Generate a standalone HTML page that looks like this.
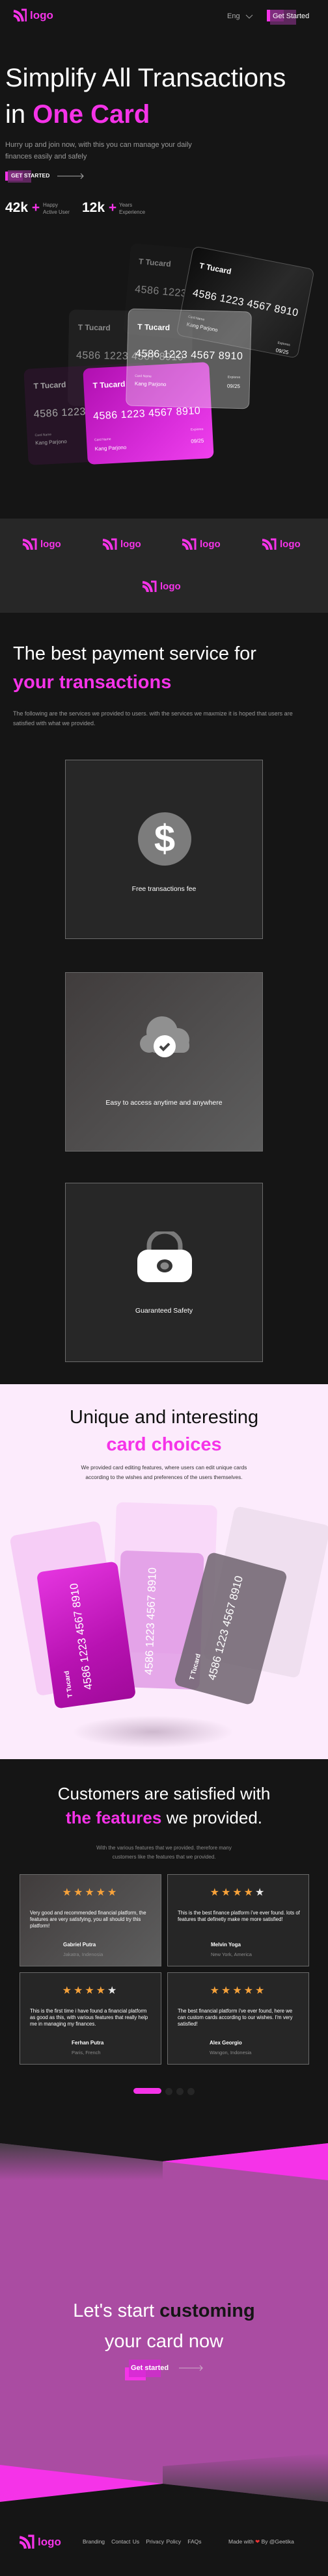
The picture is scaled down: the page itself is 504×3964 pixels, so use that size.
<!DOCTYPE html>
<html><head><meta charset="utf-8">
<style>
*{margin:0;padding:0;box-sizing:border-box}
body{width:504px;height:3964px;background:#151515;font-family:"Liberation Sans",sans-serif;position:relative;overflow:hidden;color:#fff}
.a{position:absolute}
.pk{color:#f533e8}
.logo{position:absolute;display:flex;align-items:center;gap:5px;color:#f533e8;font-weight:bold;font-size:17px}
.card{position:absolute;border-radius:10px;overflow:hidden;color:#fff}
.card .t{position:absolute;left:14px;top:20px;font-size:12px;font-weight:bold}
.card .n{position:absolute;left:12px;top:62px;font-size:16px;letter-spacing:.5px}
.card .cn{position:absolute;left:12px;top:100px;font-size:5px;opacity:.8}
.card .kp{position:absolute;left:12px;top:110px;font-size:8px}
.card .ex{position:absolute;right:14px;top:98px;font-size:5px;opacity:.8}
.card .dt{position:absolute;right:14px;top:110px;font-size:8px}
.box{position:absolute;left:100px;width:304px;height:276px;border:1.5px solid #6b6b6b;background:#272727}
.box .lb{position:absolute;width:100%;text-align:center;font-size:10.5px}
.tb{position:absolute;width:218px;height:142px;border:1.5px solid #6b6b6b;background:#262626}
.tb .st{position:absolute;top:17px;width:100%;text-align:center;color:#f7a23a;font-size:16px;letter-spacing:3px}
.tb .st b{color:#e8e8e8;font-weight:normal}
.tb .q{position:absolute;left:15px;right:12px;top:54px;font-size:7.8px;line-height:10px}
.tb .nm{position:absolute;top:103px;font-size:8px;font-weight:bold}
.tb .lc{position:absolute;top:118px;font-size:7.5px;color:#8a8a8a}
.vc{position:absolute;border-radius:10px;overflow:hidden}
</style></head><body>

<!-- header -->
<div class="logo" style="left:19px;top:13px">
<svg width="22" height="22" viewBox="0 0 22 22"><path d="M2 4 Q14 6 16 20" stroke="#f533e8" stroke-width="4" fill="none"/><path d="M2 11 Q9 12 10 20" stroke="#f533e8" stroke-width="4" fill="none"/><path d="M14 2h7v18" stroke="#f533e8" stroke-width="3" fill="none"/></svg>logo</div>
<div class="a" style="left:349px;top:19px;font-size:11px;color:#aaa">Eng</div>
<svg class="a" style="left:377px;top:22px" width="12" height="8"><path d="M1 1l5 5 5-5" stroke="#999" fill="none"/></svg>
<div class="a" style="left:410px;top:15px;width:26px;height:18px;background:#f533e8"></div>
<div class="a" style="left:415px;top:15px;width:40px;height:23px;background:#6b2a6b;opacity:.85"></div>
<div class="a" style="left:419px;top:19px;font-size:11px">Get Started</div>

<!-- hero -->
<div class="a" style="left:8px;top:92px;font-size:40px;line-height:56px;white-space:nowrap">Simplify All Transactions<br>in <b class="pk">One Card</b></div>
<div class="a" style="left:8px;top:214px;font-size:11px;line-height:18px;color:#999">Hurry up and join now, with this you can manage your daily<br>finances easily and safely</div>
<div class="a" style="left:8px;top:264px;width:27px;height:14px;background:#f533e8"></div>
<div class="a" style="left:12px;top:262px;width:36px;height:19px;background:#6b2a6b;opacity:.85"></div>
<div class="a" style="left:17px;top:265px;font-size:8.5px;font-weight:bold">GET STARTED</div>
<svg class="a" style="left:88px;top:266px" width="42" height="10"><path d="M0 5h40M36 1l4 4-4 4" stroke="#aaa" fill="none"/></svg>
<div class="a" style="left:8px;top:308px;font-size:21px;font-weight:bold">42k <span class="pk">+</span></div>
<div class="a" style="left:66px;top:310px;font-size:8px;line-height:11px;color:#999">Happy<br>Active User</div>
<div class="a" style="left:126px;top:308px;font-size:21px;font-weight:bold">12k <span class="pk">+</span></div>
<div class="a" style="left:183px;top:310px;font-size:8px;line-height:11px;color:#999">Years<br>Experience</div>

<!-- hero cards -->
<div class="card" style="left:195px;top:382px;width:190px;height:140px;transform:rotate(5deg);background:rgba(40,40,40,.45);opacity:.45"><div class="t">T Tucard</div><div class="n">4586 1223 4567 8910</div></div>
<div class="card" style="left:282px;top:395px;width:190px;height:140px;transform:rotate(11deg);background:linear-gradient(120deg,#0c0c0c,#2a2a2a 60%,#1a1a1a);border:1px solid #555"><div class="t">T Tucard</div><div class="n">4586 1223 4567 8910</div><div class="cn" style="top:105px">Card Name</div><div class="kp" style="top:115px">Kang Parjono</div><div class="ex" style="top:118px">Expiores</div><div class="dt" style="top:128px">09/25</div></div>
<div class="card" style="left:105px;top:478px;width:190px;height:148px;transform:rotate(1deg);background:rgba(60,60,60,.6);opacity:.5"><div class="t">T Tucard</div><div class="n">4586 1223 4567 8910</div></div>
<div class="card" style="left:40px;top:563px;width:190px;height:148px;transform:rotate(-3deg);background:rgba(70,20,70,.6);opacity:.6"><div class="t">T Tucard</div><div class="n">4586 1223 4567 8910</div><div class="cn">Card Name</div><div class="kp">Kang Parjono</div></div>
<div class="card" style="left:131px;top:562px;width:194px;height:148px;transform:rotate(-3deg);background:linear-gradient(135deg,#b00fb0,#d72bd9 60%,#f040ee)"><div class="t">T Tucard</div><div class="n" style="top:66px">4586 1223 4567 8910</div><div class="cn" style="top:108px">Card Name</div><div class="kp" style="top:120px">Kang Parjono</div><div class="ex" style="top:100px">Expiores</div><div class="dt" style="top:116px">09/25</div></div>
<div class="card" style="left:195px;top:477px;width:190px;height:150px;transform:rotate(1.5deg);background:rgba(230,230,230,.35);border:1px solid rgba(255,255,255,.3)"><div class="t">T Tucard</div><div class="n" style="top:60px">4586 1223 4567 8910</div><div class="cn">Card Name</div><div class="kp">Kang Parjono</div><div class="ex">Expiores</div><div class="dt">09/25</div></div>

<!-- logos band -->
<div class="a" style="left:0;top:798px;width:504px;height:145px;background:#272727"></div>
<div class="logo" style="left:33px;top:828px;font-size:15px"><svg width="24" height="18" viewBox="0 0 22 18"><path d="M1 3 Q13 4 15 18" stroke="#f533e8" stroke-width="4" fill="none"/><path d="M1 9 Q8 10 9 18" stroke="#f533e8" stroke-width="4" fill="none"/><path d="M14 2h7v16" stroke="#f533e8" stroke-width="3" fill="none"/></svg>logo</div>
<div class="logo" style="left:156px;top:828px;font-size:15px"><svg width="24" height="18" viewBox="0 0 22 18"><path d="M1 3 Q13 4 15 18" stroke="#f533e8" stroke-width="4" fill="none"/><path d="M1 9 Q8 10 9 18" stroke="#f533e8" stroke-width="4" fill="none"/><path d="M14 2h7v16" stroke="#f533e8" stroke-width="3" fill="none"/></svg>logo</div>
<div class="logo" style="left:278px;top:828px;font-size:15px"><svg width="24" height="18" viewBox="0 0 22 18"><path d="M1 3 Q13 4 15 18" stroke="#f533e8" stroke-width="4" fill="none"/><path d="M1 9 Q8 10 9 18" stroke="#f533e8" stroke-width="4" fill="none"/><path d="M14 2h7v16" stroke="#f533e8" stroke-width="3" fill="none"/></svg>logo</div>
<div class="logo" style="left:401px;top:828px;font-size:15px"><svg width="24" height="18" viewBox="0 0 22 18"><path d="M1 3 Q13 4 15 18" stroke="#f533e8" stroke-width="4" fill="none"/><path d="M1 9 Q8 10 9 18" stroke="#f533e8" stroke-width="4" fill="none"/><path d="M14 2h7v16" stroke="#f533e8" stroke-width="3" fill="none"/></svg>logo</div>
<div class="logo" style="left:217px;top:893px;font-size:15px"><svg width="24" height="18" viewBox="0 0 22 18"><path d="M1 3 Q13 4 15 18" stroke="#f533e8" stroke-width="4" fill="none"/><path d="M1 9 Q8 10 9 18" stroke="#f533e8" stroke-width="4" fill="none"/><path d="M14 2h7v16" stroke="#f533e8" stroke-width="3" fill="none"/></svg>logo</div>

<!-- services -->
<div class="a" style="left:20px;top:984px;font-size:29px;line-height:44px;white-space:nowrap">The best payment service for<br><b class="pk">your transactions</b></div>
<div class="a" style="left:20px;top:1091px;width:465px;font-size:9px;line-height:15px;color:#999">The following are the services we provided to users. with the services we maxmize it is hoped that users are satisfied with what we provided.</div>

<div class="box" style="top:1169px">
<div class="a" style="left:111px;top:80px;width:82px;height:82px;border-radius:50%;background:#7c7c7c;color:#fff;font-size:58px;font-weight:bold;text-align:center;line-height:82px">$</div>
<div class="lb" style="top:192px">Free transactions fee</div></div>
<div class="box" style="top:1496px;background:linear-gradient(135deg,#403c3c,#5e5e5e)">
<svg class="a" style="left:110px;top:65px" width="84" height="66" viewBox="0 0 84 66"><circle cx="38" cy="26" r="24" fill="#909090"/><circle cx="62" cy="38" r="18" fill="#909090"/><circle cx="18" cy="44" r="14" fill="#909090"/><rect x="18" y="36" width="62" height="22" rx="10" fill="#909090"/><circle cx="42" cy="48" r="17" fill="#fff"/><path d="M35 48l5 5 9-9" stroke="#444" stroke-width="4" fill="none"/></svg>
<div class="lb" style="top:194px">Easy to access anytime and anywhere</div></div>
<div class="box" style="top:1820px">
<svg class="a" style="left:110px;top:74px" width="84" height="80" viewBox="0 0 84 80"><path d="M18 32V22a24 22 0 0 1 48 0v10" stroke="#7a7a7a" stroke-width="7" fill="none"/><rect x="0" y="28" width="84" height="50" rx="16" fill="#fff"/><ellipse cx="42" cy="53" rx="12" ry="10" fill="#333"/><ellipse cx="42" cy="53" rx="6.5" ry="5.5" fill="#888"/></svg>
<div class="lb" style="top:190px">Guaranteed Safety</div></div>

<!-- unique cards -->
<div class="a" style="left:0;top:2130px;width:504px;height:577px;background:#fcebfc"></div>
<div class="a" style="left:0;top:2160px;width:504px;text-align:center;font-size:29px;line-height:42px;color:#111">Unique and interesting<br><b class="pk">card choices</b></div>
<div class="a" style="left:0;top:2251px;width:504px;text-align:center;font-size:8.3px;line-height:15px;color:#333">We provided card editing features, where users can edit unique cards<br>according to the wishes and preferences of the users themselves.</div>
<div class="a" style="left:110px;top:2640px;width:250px;height:50px;border-radius:50%;background:radial-gradient(ellipse,rgba(120,90,120,.35),rgba(252,235,252,0) 70%)"></div>
<div class="vc" style="left:35px;top:2350px;width:140px;height:250px;transform:rotate(-10deg);background:rgba(240,180,240,.55)"></div>
<div class="vc" style="left:175px;top:2314px;width:155px;height:230px;transform:rotate(2deg);background:rgba(245,200,245,.5)"></div>
<div class="vc" style="left:335px;top:2330px;width:150px;height:240px;transform:rotate(12deg);background:rgba(230,215,230,.6)"></div>
<div class="vc" style="left:182px;top:2388px;width:128px;height:210px;transform:rotate(2deg);background:rgba(220,140,225,.7);color:#fff"><div class="a" style="left:40px;transform:rotate(-90deg);font-size:17px;white-space:nowrap;transform-origin:left top;top:190px">4586 1223 4567 8910</div></div>
<div class="vc" style="left:70px;top:2410px;width:125px;height:212px;transform:rotate(-8deg);background:linear-gradient(160deg,#e535e0,#b812b2 60%,#a00a9a);color:#fff"><div class="a" style="left:45px;top:190px;transform:rotate(-90deg);transform-origin:left top;font-size:17px;white-space:nowrap">4586 1223 4567 8910</div><div class="a" style="left:20px;top:198px;transform:rotate(-90deg);transform-origin:left top;font-size:10px;white-space:nowrap;font-weight:bold">T Tucard</div></div>
<div class="vc" style="left:292px;top:2400px;width:125px;height:212px;transform:rotate(15deg);background:rgba(110,100,110,.85);color:#fff"><div class="a" style="left:45px;top:190px;transform:rotate(-90deg);transform-origin:left top;font-size:17px;white-space:nowrap">4586 1223 4567 8910</div><div class="a" style="left:20px;top:198px;transform:rotate(-90deg);transform-origin:left top;font-size:10px;white-space:nowrap;font-weight:bold">T Tucard</div></div>

<!-- testimonials -->
<div class="a" style="left:0;top:2742px;width:504px;text-align:center;font-size:26px;line-height:37px">Customers are satisfied with<br><b class="pk">the features</b> we provided.</div>
<div class="a" style="left:0;top:2837px;width:504px;text-align:center;font-size:8px;line-height:14px;color:#8a8a8a">With the various features that we provided. therefore many<br>customers like the features that we provided.</div>
<div class="tb" style="left:30px;top:2884px;background:linear-gradient(135deg,#403c3c,#5e5e5e)"><div class="st">★★★★★</div><div class="q">Very good and recommended financial platform, the features are very satisfying, you all should try this platform!</div><div class="nm" style="left:66px">Gabriel Putra</div><div class="lc" style="left:66px">Jakatra, Indenosia</div></div>
<div class="tb" style="left:257px;top:2884px"><div class="st">★★★★<b>★</b></div><div class="q">This is the best finance platform i've ever found. lots of features that definetly make me more satisfied!</div><div class="nm" style="left:66px">Melvin Yoga</div><div class="lc" style="left:66px">New York, America</div></div>
<div class="tb" style="left:30px;top:3035px"><div class="st">★★★★<b>★</b></div><div class="q">This is the first time i have found a financial platform as good as this, with various features that really help me in managing my finances.</div><div class="nm" style="left:79px">Ferhan Putra</div><div class="lc" style="left:79px">Paris, French</div></div>
<div class="tb" style="left:257px;top:3035px"><div class="st">★★★★★</div><div class="q">The best financial platform i've ever found, here we can custom cards according to our wishes. I'm very satisfied!</div><div class="nm" style="left:64px">Alex Georgio</div><div class="lc" style="left:64px">Wangon, Indonesia</div></div>
<div class="a" style="left:205px;top:3213px;width:43px;height:9px;border-radius:5px;background:#f533e8"></div>
<div class="a" style="left:254px;top:3213px;width:11px;height:11px;border-radius:50%;background:#262626"></div>
<div class="a" style="left:271px;top:3213px;width:11px;height:11px;border-radius:50%;background:#262626"></div>
<div class="a" style="left:288px;top:3213px;width:11px;height:11px;border-radius:50%;background:#262626"></div>

<!-- CTA -->
<svg class="a" style="left:0;top:3295px" width="504" height="570" viewBox="0 0 504 570">
<defs><linearGradient id="g1" x1="0" y1="0" x2="0" y2="1"><stop offset="0" stop-color="#3c3c3c"/><stop offset="1" stop-color="#aa4ca2"/></linearGradient>
<linearGradient id="g2" x1="0" y1="1" x2="0" y2="0"><stop offset="0" stop-color="#3c3c3c"/><stop offset="1" stop-color="#aa4ca2"/></linearGradient></defs>
<rect x="0" y="0" width="504" height="570" fill="#aa4ca2"/>
<polygon points="0,3 250,31 250,60 0,60" fill="url(#g1)" opacity=".9"/>
<polygon points="0,0 504,0 504,3 250,31 0,3" fill="#151515"/>
<polygon points="250,31 504,3 504,60" fill="#f533e8"/>
<polygon points="504,480 504,555 250,527 250,500" fill="url(#g2)" opacity=".9"/>
<polygon points="0,498 250,527 0,555" fill="#f533e8"/>
<polygon points="0,555 250,527 504,555 504,570 0,570" fill="#151515"/>
</svg>
<div class="a" style="left:0;top:3533px;width:504px;text-align:center;font-size:29px;line-height:47px">Let's start <b style="color:#151515">customing</b><br>your card now</div>
<div class="a" style="left:192px;top:3643px;width:32px;height:20px;background:#f533e8"></div>
<div class="a" style="left:198px;top:3631px;width:49px;height:27px;background:#d22bd0;opacity:.8"></div>
<div class="a" style="left:201px;top:3638px;font-size:11px;font-weight:bold">Get started</div>
<svg class="a" style="left:275px;top:3639px" width="38" height="10"><path d="M0 5h36M32 1l4 4-4 4" stroke="#ddd" fill="none" opacity=".7"/></svg>

<!-- footer -->
<div class="logo" style="left:27px;top:3900px;font-size:17px"><svg width="26" height="24" viewBox="0 0 22 22"><path d="M2 4 Q14 6 16 20" stroke="#f533e8" stroke-width="4" fill="none"/><path d="M2 11 Q9 12 10 20" stroke="#f533e8" stroke-width="4" fill="none"/><path d="M14 2h7v18" stroke="#f533e8" stroke-width="3" fill="none"/></svg>logo</div>
<div class="a" style="left:127px;top:3906px;font-size:8.5px;color:#bbb;word-spacing:1px;white-space:nowrap">Branding &nbsp; Contact Us &nbsp; Privacy Policy &nbsp; FAQs</div>
<div class="a" style="left:351px;top:3906px;font-size:8.5px;color:#bbb;white-space:nowrap">Made with <span style="color:#e33">❤</span> By @Geetika</div>
</body></html>
